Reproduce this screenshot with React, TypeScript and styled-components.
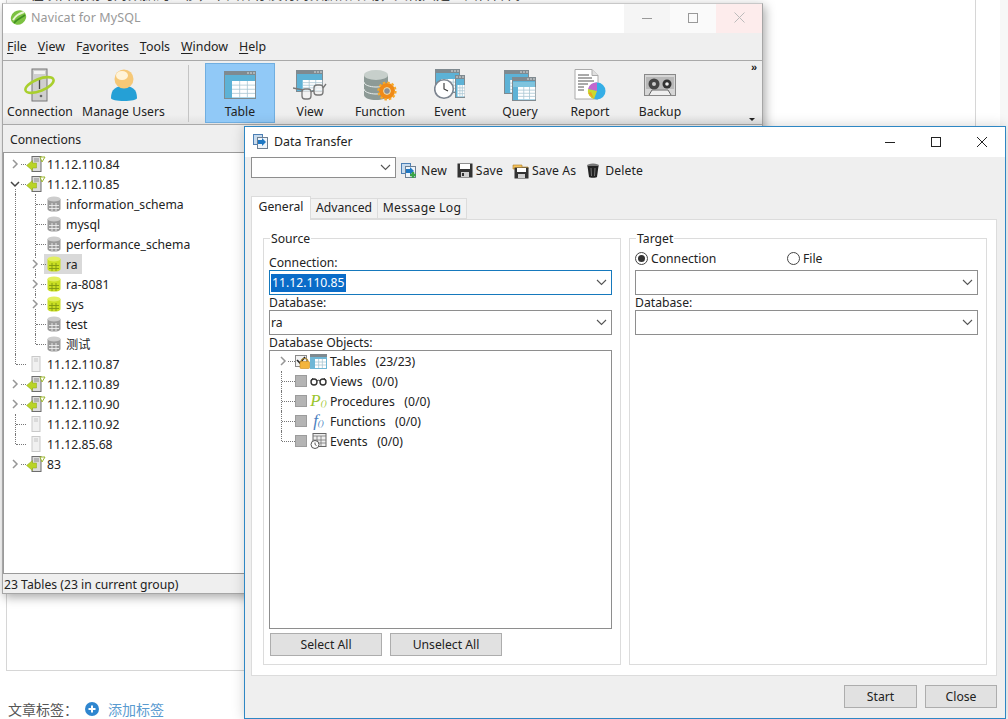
import React from "react";
import styled, { createGlobalStyle } from "styled-components";

const Global = createGlobalStyle`
  html, body { margin: 0; padding: 0; background: #fff; overflow: hidden; }
  body { font-family: "Noto Sans", "Noto Sans CJK SC", sans-serif; font-size: 12px; color: #222; }
  * { box-sizing: border-box; }
`;

const Desktop = styled.div`position: relative; width: 1008px; height: 719px; overflow: hidden; display: flex;`;
const WebPage = styled.div`width: 1000px; height: 719px; display: flex; flex-direction: column;`;
const Strip = styled.div`width: 8px; background: #f7f7f7;`;
const Editor = styled.div`
  margin-left: 6px; width: 970px; height: 671px; border: 1px solid #d6d6d6; border-top: 0; overflow: hidden;
`;
const ClippedText = styled.div`
  margin: -17px 0 0 23px; font: 14px/20px "Noto Sans CJK SC", sans-serif; color: #444; white-space: nowrap;
`;
const TagRow = styled.div`
  margin: 29px 0 0 8px; display: flex; align-items: center; height: 18px;
  font: 14px/18px "Noto Sans CJK SC", sans-serif; color: #555;
`;
const TagLink = styled.span`color: #5a9bd0; margin-left: 9px;`;
const TagPlus = styled.svg`margin-left: 7px;`;

const MainWindow = styled.div`
  position: absolute; left: 2px; top: 3px; width: 761px; height: 591px; display: flex; flex-direction: column;
  background: #efefef; border: 1px solid #a6a6a6; border-top-color: #c8c8c8; box-shadow: 2px 3px 10px rgba(0,0,0,.35);
`;
const TitleBar = styled.div`height: 29px; background: #fff; display: flex; align-items: center; flex: none;`;
const AppLogo = styled.svg`margin-left: 7px; flex: none; margin-bottom: 2px;`;
const MainTitle = styled.span`margin: 0 0 2px 4px; font-size: 12.5px; color: #999; flex: 1; letter-spacing: .1px;`;
const WinBtn = styled.div<{ $bg: string }>`
  width: 46px; height: 29px; background: ${p => p.$bg}; display: flex; align-items: center; justify-content: center; padding-bottom: 2px;
`;
const MenuBar = styled.div`
  height: 28px; flex: none; display: flex; align-items: center; padding-left: 4px; gap: 11px; border-bottom: 1px solid #a9a9a9; font-size: 12.4px;
`;
const MenuItem = styled.span`color: #222; u { text-underline-offset: 2px; }`;
const Toolbar = styled.div`
  height: 64px; flex: none; position: relative; display: flex; padding: 2px 0 0 2px;
  background: linear-gradient(#efefef 85%, #e2e2e2);
  border-bottom: 1px solid #a9a9a9;
`;
const ToolItem = styled.div<{ $w: number; $active?: boolean }>`
  width: ${p => p.$w}px; height: 60px; flex: none; display: flex; flex-direction: column; align-items: center;
  font-size: 12.2px; color: #222; letter-spacing: .05px;
  border: 1px solid ${p => (p.$active ? "#70aee0" : "transparent")};
  background: ${p => (p.$active ? "#91c9f7" : "transparent")};
`;
const ToolIconBox = styled.div`height: 38px; display: flex; align-items: center; justify-content: center; margin-top: 2px; flex: none;`;
const ToolLabel = styled.span`line-height: 16px; white-space: nowrap;`;
const ToolDivider = styled.div`width: 1px; height: 57px; background: #c4c4c4; margin: 2px 16px 0 16px; flex: none;`;
const MoreMark = styled.span`position: absolute; right: 5px; top: 0; font: bold 11px/12px "Liberation Sans", sans-serif; color: #111;`;
const MoreCaret = styled.span`
  position: absolute; right: 7px; bottom: 3px; width: 0; height: 0;
  border-left: 3px solid transparent; border-right: 3px solid transparent; border-top: 3px solid #222;
`;
const PaneHeader = styled.div`
  height: 28px; flex: none; padding: 2px 0 0 7px; display: flex; align-items: center; font-size: 12.2px; border-bottom: 1px solid #9a9a9a;
`;
const TreePane = styled.div`flex: 1; background: #fff; padding: 1px 0 0 2px; border-left: 1px solid #9a9a9a; border-bottom: 1px solid #9a9a9a;`;
const StatusBar = styled.div`height: 19px; flex: none; padding: 2px 0 0 1px; display: flex; align-items: center; font-size: 12.2px;`;

const TreeRow = styled.div`height: 20px; display: flex; align-items: center;`;
const Slot = styled.div<{ $v?: "through" | "top" | "down"; $h?: boolean; $w?: number }>`
  position: relative; width: ${p => p.$w ?? 20}px; height: 20px; flex: none;
  display: flex; align-items: center; justify-content: center;
  ${p => p.$v && `&::before { content: ""; position: absolute; left: 9px; border-left: 1px dotted #777;
    top: ${p.$v === "down" ? 10 : 0}px; bottom: ${p.$v === "top" ? 10 : 0}px; }`}
  ${p => p.$h && `&::after { content: ""; position: absolute; left: 10px; right: 0; top: 10px; border-top: 1px dotted #777; }`}
`;
const Chevron = styled.svg`position: relative; z-index: 1; background: #fff; margin-left: -2px;`;
const RowBody = styled.div<{ $sel?: boolean; $level: number }>`
  display: flex; align-items: center; height: 20px; gap: ${p => (p.$level ? 4 : 1)}px;
  padding: 0 4px 0 ${p => (p.$level ? 2 : 0)}px; margin-left: ${p => (p.$level ? -2 : 0)}px;
  background: ${p => (p.$sel ? "#d9d9d9" : "transparent")}; white-space: pre; color: #222;
  font-size: 12.2px;
`;

const Dialog = styled.div`
  position: absolute; left: 244px; top: 126px; width: 762px; height: 593px; display: flex; flex-direction: column;
  background: #efefef; border: 1px solid #2e87c4; box-shadow: 0 0 12px rgba(0,0,0,.18);
`;
const DialogTitle = styled.div`height: 30px; flex: none; background: #fff; display: flex; align-items: center; padding-left: 8px;`;
const DialogName = styled.span`margin: 0 0 2px 4px; flex: 1; font-size: 12.4px;`;
const DlgBtn = styled.div`width: 46px; height: 30px; display: flex; align-items: center; justify-content: center;`;
const DialogBody = styled.div`flex: 1; display: flex; flex-direction: column; padding: 0 8px 0 6px; min-height: 0;`;
const TransferBar = styled.div`height: 23px; flex: none; display: flex; align-items: flex-start; font-size: 12.2px;`;
const Combo = styled.div<{ $w?: number; $h: number; $focus?: boolean }>`
  width: ${p => (p.$w ? p.$w + "px" : "auto")}; height: ${p => p.$h}px; flex: none; background: #fff;
  border: 1px solid ${p => (p.$focus ? "#1679bd" : "#8e8e8e")};
  display: flex; align-items: center; justify-content: space-between; padding: 0 2px 0 1px;
  font-size: 12.2px;
`;
const Selected = styled.span`background: #0a6cc8; color: #fff; padding: 0 1px; line-height: 18px;`;
const BarBtn = styled.div<{ $ml: number; $gap?: number }>`
  display: flex; align-items: center; gap: ${p => p.$gap ?? 3}px; margin-left: ${p => p.$ml}px; height: 23px; padding-top: 4px; color: #222; letter-spacing: .12px;
`;
const Tabs = styled.div`margin-top: 16px; height: 23px; flex: none; display: flex; align-items: flex-end; position: relative; z-index: 1;`;
const Tab = styled.div<{ $w: number; $active?: boolean; $ls?: number }>`
  width: ${p => p.$w}px; height: ${p => (p.$active ? 24 : 21)}px; margin-bottom: ${p => (p.$active ? -1 : 0)}px;
  display: flex; align-items: center; justify-content: center; font-size: 12.2px; padding-bottom: ${p => (p.$active ? 5 : 2)}px;
  letter-spacing: ${p => p.$ls ?? 0}px;
  background: ${p => (p.$active ? "#fff" : "#f2f2f2")};
  border: 1px solid #dcdcdc; border-left-width: ${p => (p.$active ? 1 : 0)}px; border-bottom-width: ${p => (p.$active ? 0 : 1)}px;
`;
const Panel = styled.div`
  height: 457px; flex: none; background: #fff; border: 1px solid #dcdcdc; padding: 18px 9px 10px 11px; display: flex; gap: 8px;
`;
const Group = styled.div`
  position: relative; flex: 1; border: 1px solid #dcdcdc; padding: 17px 8px 0 5px; display: flex; flex-direction: column; min-width: 0;
`;
const Legend = styled.span`position: absolute; left: 6px; top: -8px; padding: 0 1px; background: #fff; line-height: 15px; font-size: 12.2px;`;
const FieldLabel = styled.div<{ $h: number }>`height: ${p => p.$h}px; line-height: ${p => p.$h}px; font-size: 12.2px; flex: none; white-space: nowrap;`;
const ObjectList = styled.div`height: 279px; flex: none; border: 1px solid #8e8e8e; padding: 0 0 0 2px;`;
const ButtonRow = styled.div`display: flex; gap: 8px; margin: 4px 0 0 1px;`;
const GreyButton = styled.div<{ $w: number }>`
  width: ${p => p.$w}px; height: 23px; flex: none; background: #e1e1e1; border: 1px solid #adadad;
  display: flex; align-items: center; justify-content: center; font-size: 12.2px;
`;
const RadioRow = styled.div`height: 17px; margin-bottom: 3px; margin-top: -6px; display: flex; align-items: center; font-size: 12.2px;`;
const Radio = styled.span<{ $on?: boolean }>`
  position: relative; width: 13px; height: 13px; border-radius: 50%; border: 1px solid #444; background: #fff; flex: none; margin-right: 3px;
  ${p => p.$on && `&::after { content: ""; position: absolute; left: 2px; top: 2px; width: 7px; height: 7px; border-radius: 50%; background: #333; }`}
`;
const RadioText = styled.span<{ $w?: number }>`${p => p.$w && `width: ${p.$w}px;`}`;
const ObjIcon = styled.span<{ $c: string }>`
  width: 18px; height: 18px; display: inline-flex; align-items: baseline; justify-content: center; flex: none; color: ${p => p.$c};
  font: italic 17px/18px "Liberation Serif", serif;
  sub { font-size: 9px; line-height: 9px; vertical-align: -2px; }
`;
const Check = styled.span`width: 12px; height: 12px; flex: none; background: #b4b4b4; border: 1px solid #9c9c9c; position: relative; z-index: 1;`;
const ObjRow = styled.div`height: 20px; display: flex; align-items: center; font-size: 12.2px; white-space: pre;`;
const ObjIconWrap = styled.div<{ $ml?: number }>`width: 19px; margin-left: ${p => p.$ml ?? 2}px; display: flex; justify-content: center; flex: none;`;
const ObjLabel = styled.span`margin-left: 2px;`;
const Footer = styled.div`height: 41px; flex: none; display: flex; justify-content: flex-end; gap: 8px; padding-top: 9px;`;

const Right = () => <Chevron width="10" height="10" viewBox="0 0 10 10"><path d="M3 1l4 4-4 4" fill="none" stroke="#969696" strokeWidth="1.5" /></Chevron>;
const Down = () => <Chevron width="10" height="10" viewBox="0 0 10 10"><path d="M1 3l4 4 4-4" fill="none" stroke="#444" strokeWidth="1.5" /></Chevron>;
const ComboArrow = () => <svg width="15" height="7" viewBox="0 0 15 7"><path d="M3 1l4.500 4.500L12 1" fill="none" stroke="#555" strokeWidth="1.1" /></svg>;

const Logo = () => (
  <AppLogo width="17" height="17" viewBox="0 0 17 17">
    <ellipse cx="8.5" cy="8.5" rx="8" ry="7" fill="#7cc242" transform="rotate(-35 8.5 8.5)" />
    <path d="M3 11C6 6 9 5 14 3" stroke="#e8f5d0" strokeWidth="2" fill="none" />
    <path d="M4 14c3-4 7-5 11-8" stroke="#3f8f22" strokeWidth="1.6" fill="none" />
  </AppLogo>
);

const tableGrid = (x: number, y: number, w: number, h: number, cols: number, rows: number) => (
  <g>
    <rect x={x} y={y} width={w} height={h} fill="#fff" />
    {Array.from({ length: cols - 1 }).map((_, i) => <path key={"c" + i} d={`M${x + ((i + 1) * w) / cols} ${y}v${h}`} stroke="#a9c6d3" strokeWidth=".8" />)}
    {Array.from({ length: rows - 1 }).map((_, i) => <path key={"r" + i} d={`M${x} ${y + ((i + 1) * h) / rows}h${w}`} stroke="#a9c6d3" strokeWidth=".8" />)}
  </g>
);
const MiniWin = ({ x, y, w, h }: { x: number; y: number; w: number; h: number }) => (
  <g>
    <rect x={x} y={y} width={w} height={h} fill="#7f8a90" />
    <rect x={x + 1} y={y + 4} width={w - 2} height={h - 5} fill="#5db2d6" />
    <path d={`M${x + w - 9} ${y + 2}h2m1 0h2m1 0h2`} stroke="#ddd" strokeWidth="1" />
    {tableGrid(x + w * 0.25, y + 10, w * 0.72, h - 11.5, 3, 4)}
  </g>
);

const IconConnection = () => (
  <svg width="34" height="34" viewBox="0 0 34 34">
    <rect x="9" y="1" width="15" height="32" fill="#cfcfcf" stroke="#777" />
    <rect x="11" y="3" width="11" height="3" fill="#f2f2f2" />
    <path d="M16.5 10v11" stroke="#444" strokeWidth="1.3" />
    <circle cx="18" cy="28" r="1.3" fill="#666" />
    <ellipse cx="16.5" cy="17" rx="15" ry="6" fill="none" stroke="#a9cf2e" strokeWidth="2.6" transform="rotate(-22 16.5 17)" />
  </svg>
);
const IconUsers = () => (
  <svg width="30" height="34" viewBox="0 0 30 34">
    <path d="M2 30c0-9 5-12 13-12s13 3 13 12c0 2-6 3-13 3S2 32 2 30z" fill="#25a0d6" />
    <circle cx="15" cy="11" r="9.5" fill="#f6c877" />
    <ellipse cx="13" cy="7.5" rx="6" ry="4.5" fill="#fff3d8" />
  </svg>
);
const IconTable = () => <svg width="32" height="28" viewBox="0 0 32 28"><MiniWin x={0} y={0} w={32} h={28} /></svg>;
const IconView = () => (
  <svg width="34" height="30" viewBox="0 0 34 30">
    <MiniWin x={3} y={0} w={27} h={22} />
    <g fill="#f3f3f3" fillOpacity=".7" stroke="#777" strokeWidth="1.3">
      <path d="M0 18l10 2 0 0" fill="none" /><rect x="9" y="19" width="9" height="10" rx="3" /><rect x="21" y="15" width="9" height="10" rx="3" />
      <path d="M18 22l3-2M30 18l3-4" fill="none" />
    </g>
  </svg>
);
const IconFunction = () => (
  <svg width="34" height="32" viewBox="0 0 34 32">
    <path d="M1 6v20c0 3 6 5 12 5s12-2 12-5V6z" fill="#8d9a96" />
    <ellipse cx="13" cy="6" rx="12" ry="5" fill="#c7cfcb" />
    <path d="M1 13c0 3 6 5 12 5s12-2 12-5M1 20c0 3 6 5 12 5s12-2 12-5" fill="none" stroke="#e8ecea" />
    <circle cx="24" cy="22" r="8" fill="#f08a17" />
    <circle cx="24" cy="22" r="8.6" fill="none" stroke="#f7a928" strokeWidth="2" strokeDasharray="2.5 2" />
    <circle cx="24" cy="22" r="3.4" fill="#8b8f96" stroke="#fce2a6" />
  </svg>
);
const IconEvent = () => (
  <svg width="32" height="32" viewBox="0 0 32 32">
    <MiniWin x={1} y={0} w={25} h={24} />
    <MiniWin x={21} y={6} w={10} h={23} />
    <circle cx="10" cy="20" r="9.3" fill="#fff" stroke="#7d8590" strokeWidth="1.6" />
    <path d="M10 14v6l4 2" fill="none" stroke="#333" strokeWidth="1.1" />
  </svg>
);
const IconQuery = () => (
  <svg width="32" height="31" viewBox="0 0 32 31">
    <MiniWin x={0} y={0} w={25} h={24} />
    <MiniWin x={8} y={7} w={24} h={24} />
    <rect x="9" y="12" width="22" height="5" fill="#7fc4de" />
  </svg>
);
const IconReport = () => (
  <svg width="33" height="32" viewBox="0 0 33 32">
    <path d="M1 .5h17l6 6V30H1z" fill="#fff" stroke="#aaa" />
    <path d="M18 .5v6h6" fill="#e0e0e0" stroke="#aaa" />
    <path d="M4 6h11M4 9h14M4 12h16M4 15h10M4 18h6M4 21h6" stroke="#555" strokeWidth="1" />
    <circle cx="23" cy="22" r="8.5" fill="#35aee6" />
    <path d="M23 22V13.5A8.5 8.5 0 0 0 14 20z" fill="#c267cf" />
    <path d="M23 22l-9-2a8.5 8.5 0 0 0 6 10z" fill="#c9d92e" />
    <path d="M14 24l6 6-3-7z" fill="#f0a020" />
  </svg>
);
const IconBackup = () => (
  <svg width="32" height="22" viewBox="0 0 32 22">
    <rect x=".5" y=".5" width="31" height="21" fill="#d6d6d6" stroke="#888" />
    <rect x="2" y="3" width="28" height="12" fill="#b8b8b8" />
    <circle cx="10" cy="10" r="5.5" fill="#444" /><circle cx="10" cy="10" r="2" fill="#ccc" />
    <circle cx="23" cy="10" r="4.5" fill="#333" /><circle cx="23" cy="10" r="1.8" fill="#eee" />
    <path d="M5 21l3-5h16l3 5" fill="#efefef" stroke="#666" />
  </svg>
);

const IconServer = ({ on }: { on: boolean }) => on ? (
  <svg width="20" height="16" viewBox="0 0 20 16">
    <rect x="6" y="0.5" width="9" height="15" fill="#dcdcdc" stroke="#6d6d6d" />
    <path d="M8 3h5M8 5h5" stroke="#8a8a8a" />
    <path d="M14 1h5l-3 5z" fill="#fff" stroke="#9ab52b" />
    <path d="M0.500 9.500l6-5v2.500h4v5h-4v2.500z" fill="#b9d426" stroke="#8ca41a" strokeWidth=".5" />
  </svg>
) : (
  <svg width="20" height="16" viewBox="0 0 20 16">
    <rect x="6" y="0.5" width="8" height="15" fill="#f0f0f0" stroke="#c9c9c9" />
    <path d="M8 3h4M8 5h4" stroke="#c4c4c4" />
  </svg>
);
const IconDb = ({ on }: { on: boolean }) => {
  const [body, top, line] = on ? ["#c9de22", "#e2ef60", "#7f9612"] : ["#9b9b9b", "#cdcdcd", "#ececec"];
  return (
    <svg width="16" height="16" viewBox="0 0 16 16">
      <path d="M1.500 3v10c0 1.600 2.900 2.600 6.500 2.600s6.500-1 6.500-2.600V3z" fill={body} />
      <ellipse cx="8" cy="3" rx="6.500" ry="2.600" fill={top} />
      <path d="M6 7v8M10 7v8M3 9.500h10M3 12.500h10" stroke={line} strokeWidth=".9" />
    </svg>
  );
};
const IconTransfer = ({ plus }: { plus?: boolean }) => (
  <svg width="17" height="16" viewBox="0 0 17 16">
    <rect x=".5" y=".5" width="9" height="10" fill="#c7dbee" stroke="#4c7fb4" />
    <rect x="4.5" y="3.5" width="10" height="11" fill="#eef4fa" stroke="#6d7f92" />
    <path d="M5 6h4V4l4 4-4 4v-2H5z" fill="#1f78c4" />
    {plus && <path d="M12 9v6M9 12h6" stroke="#3aa34a" strokeWidth="2.4" />}
  </svg>
);
const IconSave = () => (
  <svg width="16" height="15" viewBox="0 0 16 15">
    <rect x=".5" y=".5" width="15" height="14" fill="#333" />
    <rect x="3" y="1" width="10" height="5" fill="#fff" />
    <rect x="4" y="9" width="8" height="5" fill="#cfcfcf" /><rect x="5" y="10" width="2" height="3" fill="#333" />
  </svg>
);
const IconSaveAs = () => (
  <svg width="17" height="16" viewBox="0 0 17 16">
    <path d="M1 2h9v2h6v2H1z" fill="#f6c25a" stroke="#a97a1e" strokeWidth=".6" />
    <rect x="2.5" y="4.5" width="14" height="11" fill="#333" />
    <rect x="5" y="5" width="9" height="4" fill="#fff" />
    <rect x="6" y="11" width="7" height="4" fill="#cfcfcf" />
  </svg>
);
const IconTrash = () => (
  <svg width="14" height="15" viewBox="0 0 14 15">
    <ellipse cx="7" cy="2.4" rx="6" ry="1.8" fill="#777" />
    <path d="M1.5 3l1.5 11c.2 1 7.800 1 8 0l1.500-11z" fill="#222" />
    <path d="M5 5l.5 8M9 5l-.5 8" stroke="#888" strokeWidth=".8" />
  </svg>
);
const IconTablesSmall = () => (
  <svg width="17" height="15" viewBox="0 0 17 15"><rect width="17" height="15" fill="#6fb7d6" /><rect x="0" y="0" width="17" height="3" fill="#7f8a90" />{tableGrid(5, 5, 11, 9, 3, 3)}</svg>
);
const IconGlasses = () => (
  <svg width="17" height="9" viewBox="0 0 17 9">
    <circle cx="4" cy="5" r="3" fill="none" stroke="#333" strokeWidth="1.4" /><circle cx="13" cy="5" r="3" fill="none" stroke="#333" strokeWidth="1.4" />
    <path d="M7 4c1-1 2-1 3 0M1 4l2-3M16 4l-2-3" fill="none" stroke="#333" />
  </svg>
);
const IconEventsSmall = () => (
  <svg width="17" height="16" viewBox="0 0 17 16">
    <rect x="3" y=".5" width="13" height="13" fill="#eee" stroke="#666" />
    <path d="M3 3h13M7 3v10M11 3v10M3 7h13M3 10h13" stroke="#777" strokeWidth=".8" />
    <circle cx="5" cy="11.500" r="4" fill="#fff" stroke="#555" />
    <path d="M5 9.500v2l1.500 1" fill="none" stroke="#333" strokeWidth=".8" />
  </svg>
);
const IconLockCheck = () => (
  <svg width="15" height="16" viewBox="0 0 15 16">
    <rect x=".5" y="2.500" width="11" height="11" fill="#f2f2f2" stroke="#8a8a8a" />
    <path d="M2 7l3 3 5-6" fill="none" stroke="#222" strokeWidth="1.6" />
    <path d="M6 9a3.500 3.500 0 0 1 7 0" fill="none" stroke="#a8822b" strokeWidth="1.200" />
    <rect x="5" y="8.500" width="9.500" height="7" rx="1" fill="#f3b43c" stroke="#c98a1a" strokeWidth=".6" />
  </svg>
);

type RowDef = { label: string; level: 0 | 1; kind: "server" | "db"; on: boolean; chev?: "r" | "d"; sel?: boolean };
const rows: RowDef[] = [
  { label: "11.12.110.84", level: 0, kind: "server", on: true, chev: "r" },
  { label: "11.12.110.85", level: 0, kind: "server", on: true, chev: "d" },
  { label: "information_schema", level: 1, kind: "db", on: false },
  { label: "mysql", level: 1, kind: "db", on: false },
  { label: "performance_schema", level: 1, kind: "db", on: false },
  { label: "ra", level: 1, kind: "db", on: true, chev: "r", sel: true },
  { label: "ra-8081", level: 1, kind: "db", on: true, chev: "r" },
  { label: "sys", level: 1, kind: "db", on: true, chev: "r" },
  { label: "test", level: 1, kind: "db", on: false },
  { label: "测试", level: 1, kind: "db", on: false },
  { label: "11.12.110.87", level: 0, kind: "server", on: false },
  { label: "11.12.110.89", level: 0, kind: "server", on: true, chev: "r" },
  { label: "11.12.110.90", level: 0, kind: "server", on: true, chev: "r" },
  { label: "11.12.110.92", level: 0, kind: "server", on: false },
  { label: "11.12.85.68", level: 0, kind: "server", on: false },
  { label: "83", level: 0, kind: "server", on: true, chev: "r" },
];

const tools: [string, React.ReactNode][] = [
  ["Table", <IconTable />], ["View", <IconView />], ["Function", <IconFunction />], ["Event", <IconEvent />],
  ["Query", <IconQuery />], ["Report", <IconReport />], ["Backup", <IconBackup />],
];

const objects: [string, string, React.ReactNode][] = [
  ["Tables", "(23/23)", <IconTablesSmall />],
  ["Views", "(0/0)", <IconGlasses />],
  ["Procedures", "(0/0)", <ObjIcon $c="#9ac52f">P<sub>()</sub></ObjIcon>],
  ["Functions", "(0/0)", <ObjIcon $c="#4a7fc0">f<sub>()</sub></ObjIcon>],
  ["Events", "(0/0)", <IconEventsSmall />],
];

const Menu = ({ pre, u, post }: { pre?: string; u: string; post: string }) => <MenuItem>{pre}<u>{u}</u>{post}</MenuItem>;

export default function App() {
  return (
    <Desktop>
      <Global />
      <WebPage>
        <Editor><ClippedText>在项目初期时对数据的迁移，下面保存没有对数据做改动，大概只是正面传传代</ClippedText></Editor>
        <TagRow>
          文章标签：
          <TagPlus width="14" height="14" viewBox="0 0 14 14"><circle cx="7" cy="7" r="7" fill="#2f86cf" /><path d="M7 3.500v7M3.500 7h7" stroke="#fff" strokeWidth="2" /></TagPlus>
          <TagLink>添加标签</TagLink>
        </TagRow>
      </WebPage>
      <Strip />

      <MainWindow>
        <TitleBar>
          <Logo />
          <MainTitle>Navicat for MySQL</MainTitle>
          <WinBtn $bg="#f5f5f5"><svg width="10" height="10"><path d="M0 5.500h10" stroke="#999" /></svg></WinBtn>
          <WinBtn $bg="#fafafa"><svg width="10" height="10"><rect x=".5" y=".5" width="9" height="9" fill="none" stroke="#999" /></svg></WinBtn>
          <WinBtn $bg="#fdecec"><svg width="11" height="11"><path d="M.5.500l10 10M10.500.500l-10 10" stroke="#bbb" /></svg></WinBtn>
        </TitleBar>
        <MenuBar>
          <Menu u="F" post="ile" /><Menu u="V" post="iew" /><Menu pre="F" u="a" post="vorites" />
          <Menu u="T" post="ools" /><Menu u="W" post="indow" /><Menu u="H" post="elp" />
        </MenuBar>
        <Toolbar>
          <ToolItem $w={70}><ToolIconBox><IconConnection /></ToolIconBox><ToolLabel>Connection</ToolLabel></ToolItem>
          <ToolItem $w={97}><ToolIconBox><IconUsers /></ToolIconBox><ToolLabel>Manage Users</ToolLabel></ToolItem>
          <ToolDivider />
          {tools.map(([label, icon], i) => (
            <ToolItem key={label} $w={70} $active={i === 0}><ToolIconBox>{icon}</ToolIconBox><ToolLabel>{label}</ToolLabel></ToolItem>
          ))}
          <MoreMark>»</MoreMark>
          <MoreCaret />
        </Toolbar>
        <PaneHeader>Connections</PaneHeader>
        <TreePane>
          {rows.map((r, i) => {
            const afterChild = i >= 2 && i <= 10;
            const outerV: "through" | "top" | "down" | undefined =
              i === 1 ? "down" : i === 10 ? "top" : afterChild ? "through" : i === 13 ? "through" : i === 14 ? "top" : undefined;
            const innerV: "through" | "top" | undefined = r.level === 1 ? (i === 9 ? "top" : "through") : undefined;
            return (
              <TreeRow key={r.label}>
                <Slot $v={outerV} $h={r.level === 0}>
                  {r.level === 0 && r.chev === "r" && <Right />}
                  {r.level === 0 && r.chev === "d" && <Down />}
                </Slot>
                {r.level === 1 && <Slot $v={innerV} $h>{r.chev === "r" && <Right />}</Slot>}
                <RowBody $sel={r.sel} $level={r.level}>
                  {r.kind === "server" ? <IconServer on={r.on} /> : <IconDb on={r.on} />}
                  <span>{r.label}</span>
                </RowBody>
              </TreeRow>
            );
          })}
        </TreePane>
        <StatusBar>23 Tables (23 in current group)</StatusBar>
      </MainWindow>

      <Dialog>
        <DialogTitle>
          <IconTransfer />
          <DialogName>Data Transfer</DialogName>
          <DlgBtn><svg width="12" height="12"><path d="M1 6.500h10" stroke="#222" /></svg></DlgBtn>
          <DlgBtn><svg width="12" height="12"><rect x="1.500" y="1.500" width="9" height="9" fill="none" stroke="#222" /></svg></DlgBtn>
          <DlgBtn><svg width="12" height="12"><path d="M1 1l10 10M11 1L1 11" stroke="#222" /></svg></DlgBtn>
        </DialogTitle>
        <DialogBody>
          <TransferBar>
            <Combo $w={145} $h={21}><span /><ComboArrow /></Combo>
            <BarBtn $ml={5}><IconTransfer plus /><span>New</span></BarBtn>
            <BarBtn $ml={10}><IconSave /><span>Save</span></BarBtn>
            <BarBtn $ml={9}><IconSaveAs /><span>Save As</span></BarBtn>
            <BarBtn $ml={10} $gap={5}><IconTrash /><span>Delete</span></BarBtn>
          </TransferBar>
          <Tabs>
            <Tab $w={60} $active>General</Tab>
            <Tab $w={67}>Advanced</Tab>
            <Tab $w={89} $ls={.3}>Message Log</Tab>
          </Tabs>
          <Panel>
            <Group>
              <Legend>Source</Legend>
              <FieldLabel $h={14}>Connection:</FieldLabel>
              <Combo $h={25} $focus><Selected>11.12.110.85</Selected><ComboArrow /></Combo>
              <FieldLabel $h={15}>Database:</FieldLabel>
              <Combo $h={25}><span>ra</span><ComboArrow /></Combo>
              <FieldLabel $h={15}>Database Objects:</FieldLabel>
              <ObjectList>
                {objects.map(([name, count, icon], i) => (
                  <ObjRow key={name}>
                    <Slot $v={i === 0 ? undefined : i === 4 ? "top" : "through"} $h $w={23}>{i === 0 && <Right />}</Slot>
                    {i === 0 ? <IconLockCheck /> : <Check />}
                    <ObjIconWrap $ml={i === 0 ? -1 : 2}>{icon}</ObjIconWrap>
                    <ObjLabel>{name}   {count}</ObjLabel>
                  </ObjRow>
                ))}
              </ObjectList>
              <ButtonRow><GreyButton $w={112}>Select All</GreyButton><GreyButton $w={112}>Unselect All</GreyButton></ButtonRow>
            </Group>
            <Group>
              <Legend>Target</Legend>
              <RadioRow><Radio $on /><RadioText $w={136}>Connection</RadioText><Radio /><RadioText>File</RadioText></RadioRow>
              <Combo $h={25}><span /><ComboArrow /></Combo>
              <FieldLabel $h={15}>Database:</FieldLabel>
              <Combo $h={25}><span /><ComboArrow /></Combo>
            </Group>
          </Panel>
          <Footer><GreyButton $w={73}>Start</GreyButton><GreyButton $w={72}>Close</GreyButton></Footer>
        </DialogBody>
      </Dialog>
    </Desktop>
  );
}
